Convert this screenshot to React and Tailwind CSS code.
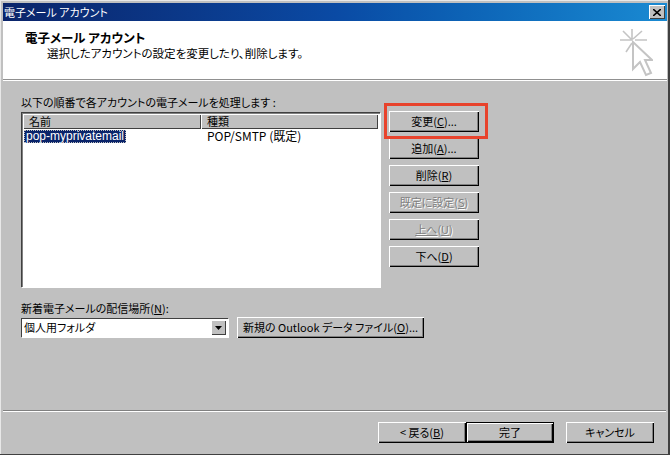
import React from 'react';

const FONT = "font-['Noto_Sans_CJK_JP','Liberation_Sans',sans-serif] [font-feature-settings:'palt']";

const WinButton = ({ children, disabled, isDefault, className = '' }) => (
  <div
    className={`flex h-[21px] items-center justify-center bg-[#c0c0c0] text-[11px] leading-none ${
      isDefault
        ? 'border border-black shadow-[inset_1px_1px_0_#fff,inset_-1px_-1px_0_#000,inset_-2px_-2px_0_#808080]'
        : 'shadow-[inset_1px_1px_0_#fff,inset_-1px_-1px_0_#000,inset_-2px_-2px_0_#808080]'
    } ${disabled ? 'text-[#808080] [text-shadow:1px_1px_0_#fff]' : 'text-black'} ${className}`}
  >
    <span className="whitespace-pre">{children}</span>
  </div>
);

const Key = ({ children }) => <span className="underline">{children}</span>;

const WizardIcon = () => (
  <svg width="34" height="50" viewBox="0 0 34 50" fill="none" stroke="#c4c4c4" strokeWidth="1.6">
    <path d="M13 2v11M1 13h12M4 4l8 8M23 4l-9 8M16 13h12M7 25l6-9" />
    <path d="M14 15v27l7-7 6 13 5-2-6-13h7z" fill="#fff" strokeWidth="2" />
  </svg>
);

export default function App() {
  return (
    <div className={`flex h-[455px] w-[670px] flex-col overflow-hidden bg-[#404040] ${FONT}`}>
      <div className="relative m-[0_2px_1px_0] flex flex-1 flex-col border-t border-l border-[#e8e8e8] bg-[#c0c0c0] p-[2px_1px_0_2px]">
        <div className="flex h-[18px] items-center justify-between bg-gradient-to-r from-[#0a246a] via-[#0a4aa4] to-[#1a8ad2] pr-[2px] pl-[1px]">
          <span className="text-[11px] leading-none text-white">電子メール アカウント</span>
          <div className="flex h-[14px] w-[16px] items-center justify-center bg-[#c0c0c0] shadow-[inset_1px_1px_0_#fff,inset_-1px_-1px_0_#404040]">
            <svg width="8" height="7" viewBox="0 0 8 7" stroke="#000" strokeWidth="1.6">
              <path d="M0 0l8 7M8 0L0 7" />
            </svg>
          </div>
        </div>

        <div className="flex h-[59px] justify-between border-b border-[#909090] bg-white pr-[14px] pl-[22px]">
          <div className="pt-[9px]">
            <div className="text-[12.5px] leading-[15px] font-bold text-black">電子メール アカウント</div>
            <div className="pl-[22px] text-[11.5px] leading-[16px] text-black">選択したアカウントの設定を変更したり、削除します。</div>
          </div>
          <div className="pt-[6px]">
            <WizardIcon />
          </div>
        </div>

        <div className="border-t border-white pt-[14px] pl-[18px]">
          <div className="mb-[3px] h-[14px] text-[11px] leading-[14px] text-black">以下の順番で各アカウントの電子メールを処理します :</div>
          <div className="flex">
            <div className="h-[175px] w-[359px] bg-white p-[2px] shadow-[inset_1px_1px_0_#404040,inset_2px_2px_0_#808080,1px_1px_0_#fff]">
              <div className="flex h-[15px] text-[11px] leading-none text-black">
                <div className="flex w-[178px] items-center bg-[#c0c0c0] pl-[6px] shadow-[inset_1px_1px_0_#fff,inset_-1px_-1px_0_#404040]">名前</div>
                <div className="flex flex-1 items-center bg-[#c0c0c0] pl-[6px] shadow-[inset_1px_1px_0_#fff,inset_-1px_-1px_0_#404040]">種類</div>
              </div>
              <div className="flex h-[14px] items-center text-[12px] leading-none">
                <div className="w-[178px] pl-[1px]">
                  <span className="inline-block h-[13px] bg-[#0a246a] px-[2px] font-['Liberation_Sans',sans-serif] text-[12px] leading-[13px] text-white outline-1 -outline-offset-1 outline-[#c0c0c0] outline-dotted">pop-myprivatemail</span>
                </div>
                <div className="pl-[6px] text-black">POP/SMTP (既定)</div>
              </div>
            </div>
            <div className="-mt-px ml-[9px] flex w-[90px] flex-col gap-[6px]">
              <WinButton>変更(<Key>C</Key>)...</WinButton>
              <WinButton>追加(<Key>A</Key>)...</WinButton>
              <WinButton>削除(<Key>R</Key>)</WinButton>
              <WinButton disabled>既定に設定(<Key>S</Key>)</WinButton>
              <WinButton disabled><Key>上へ</Key>(<Key>U</Key>)</WinButton>
              <WinButton>下へ(<Key>D</Key>)</WinButton>
            </div>
          </div>

          <div className="mt-[14px] h-[14px] text-[11px] leading-[14px] text-black">新着電子メールの配信場所(<Key>N</Key>):</div>
          <div className="mt-[2px] flex items-center">
            <div className="flex h-[19px] w-[207px] items-center justify-between bg-white pr-[2px] pl-[3px] text-[11px] leading-none text-black shadow-[inset_1px_1px_0_#404040,1px_1px_0_#fff]">
              <span>個人用フォルダ</span>
              <div className="flex h-[15px] w-[15px] items-center justify-center bg-[#c0c0c0] shadow-[inset_1px_1px_0_#fff,inset_-1px_-1px_0_#404040]">
                <svg width="7" height="4" viewBox="0 0 7 4" fill="#000">
                  <path d="M0 0h7L3.5 4z" />
                </svg>
              </div>
            </div>
            <WinButton className="ml-[9px] w-[187px]">新規の Outlook データ ファイル(<Key>O</Key>)...</WinButton>
          </div>
        </div>

        <div className="mt-auto mr-[1px] border-t border-[#808080]">
          <div className="h-px bg-white" />
          <div className="flex h-[42px] justify-end pt-[10px] pr-[12px]">
            <WinButton className="w-[88px]">&lt; 戻る(<Key>B</Key>)</WinButton>
            <WinButton isDefault className="w-[88px]">完了</WinButton>
            <WinButton className="ml-[12px] w-[88px]">キャンセル</WinButton>
          </div>
        </div>

        {/* red annotation drawn over the screenshot */}
        <div className="absolute top-[102px] left-[383px] h-[36px] w-[104px] border-[3px] border-[#e8432c]" />
      </div>
    </div>
  );
}
